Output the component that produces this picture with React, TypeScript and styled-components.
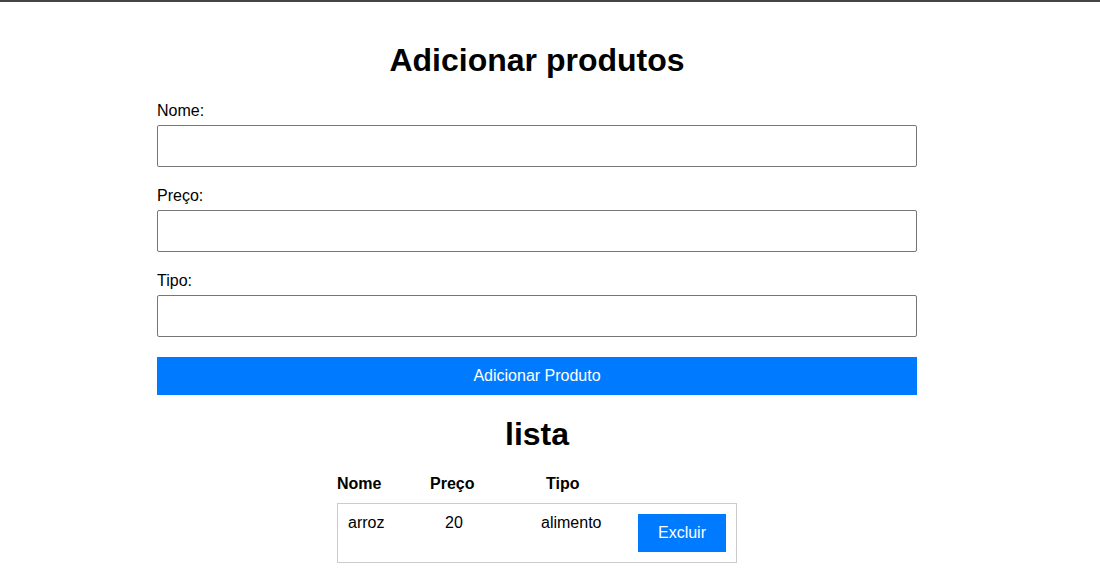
import React from "react";
import styled, { createGlobalStyle } from "styled-components";

const Global = createGlobalStyle`
  html, body { margin: 0; padding: 0; background: #fff; }
  body { font-family: "Liberation Sans", Arial, sans-serif; color: #000; }
  * { box-sizing: border-box; }
`;

const TopBar = styled.div`
  height: 2px;
  background: #444;
`;

const Page = styled.div`
  padding: 40px 26px 0 0;
`;

const Container = styled.div`
  width: 760px;
  margin: 0 auto;
  display: flex;
  flex-direction: column;
`;

const Title = styled.h1`
  font-size: 32px;
  font-weight: bold;
  text-align: center;
  margin: 0 0 22px;
  line-height: 37px;
`;

const Form = styled.form`
  display: flex;
  flex-direction: column;
  gap: 19px;
`;

const Group = styled.div`
  display: flex;
  flex-direction: column;
`;

const Label = styled.label`
  font-size: 16px;
  line-height: 19px;
  margin-bottom: 5px;
`;

const Input = styled.input`
  height: 42px;
  border: 1px solid #767676;
  border-radius: 2px;
  padding: 10px;
  font-size: 16px;
  font-family: inherit;
`;

const SubmitButton = styled.button`
  height: 38px;
  margin-top: 1px;
  border: none;
  background: #007bff;
  color: #fff;
  font-size: 16px;
  font-family: inherit;
  cursor: pointer;
`;

const ListTitle = styled.h2`
  font-size: 32px;
  font-weight: bold;
  text-align: center;
  line-height: 37px;
  margin: 21px 0 22px;
`;

const Table = styled.div`
  width: 400px;
  align-self: center;
  display: flex;
  flex-direction: column;
`;

const HeaderRow = styled.div`
  display: grid;
  grid-template-columns: 93px 116px auto;
  font-weight: bold;
  font-size: 16px;
  line-height: 18px;
  margin-bottom: 10px;
`;

const Row = styled.div`
  display: grid;
  grid-template-columns: 97px 96px 97px 88px;
  align-items: start;
  border: 1px solid #ccc;
  padding: 10px;
  font-size: 16px;
  line-height: 18px;
`;

const Cell = styled.span``;

const DeleteButton = styled.button`
  width: 88px;
  height: 38px;
  border: none;
  background: #007bff;
  color: #fff;
  font-size: 16px;
  font-family: inherit;
  cursor: pointer;
`;

const items = [{ nome: "arroz", preco: "20", tipo: "alimento" }];

export default function App() {
  return (
    <>
      <Global />
      <TopBar />
      <Page>
        <Container>
          <Title>Adicionar produtos</Title>
          <Form onSubmit={(e) => e.preventDefault()}>
            <Group>
              <Label>Nome:</Label>
              <Input type="text" />
            </Group>
            <Group>
              <Label>Preço:</Label>
              <Input type="text" />
            </Group>
            <Group>
              <Label>Tipo:</Label>
              <Input type="text" />
            </Group>
            <SubmitButton type="submit">Adicionar Produto</SubmitButton>
          </Form>
          <ListTitle>lista</ListTitle>
          <Table>
            <HeaderRow>
              <span>Nome</span>
              <span>Preço</span>
              <span>Tipo</span>
            </HeaderRow>
            {items.map((it, i) => (
              <Row key={i}>
                <Cell>{it.nome}</Cell>
                <Cell>{it.preco}</Cell>
                <Cell>{it.tipo}</Cell>
                <DeleteButton>Excluir</DeleteButton>
              </Row>
            ))}
          </Table>
        </Container>
      </Page>
    </>
  );
}
